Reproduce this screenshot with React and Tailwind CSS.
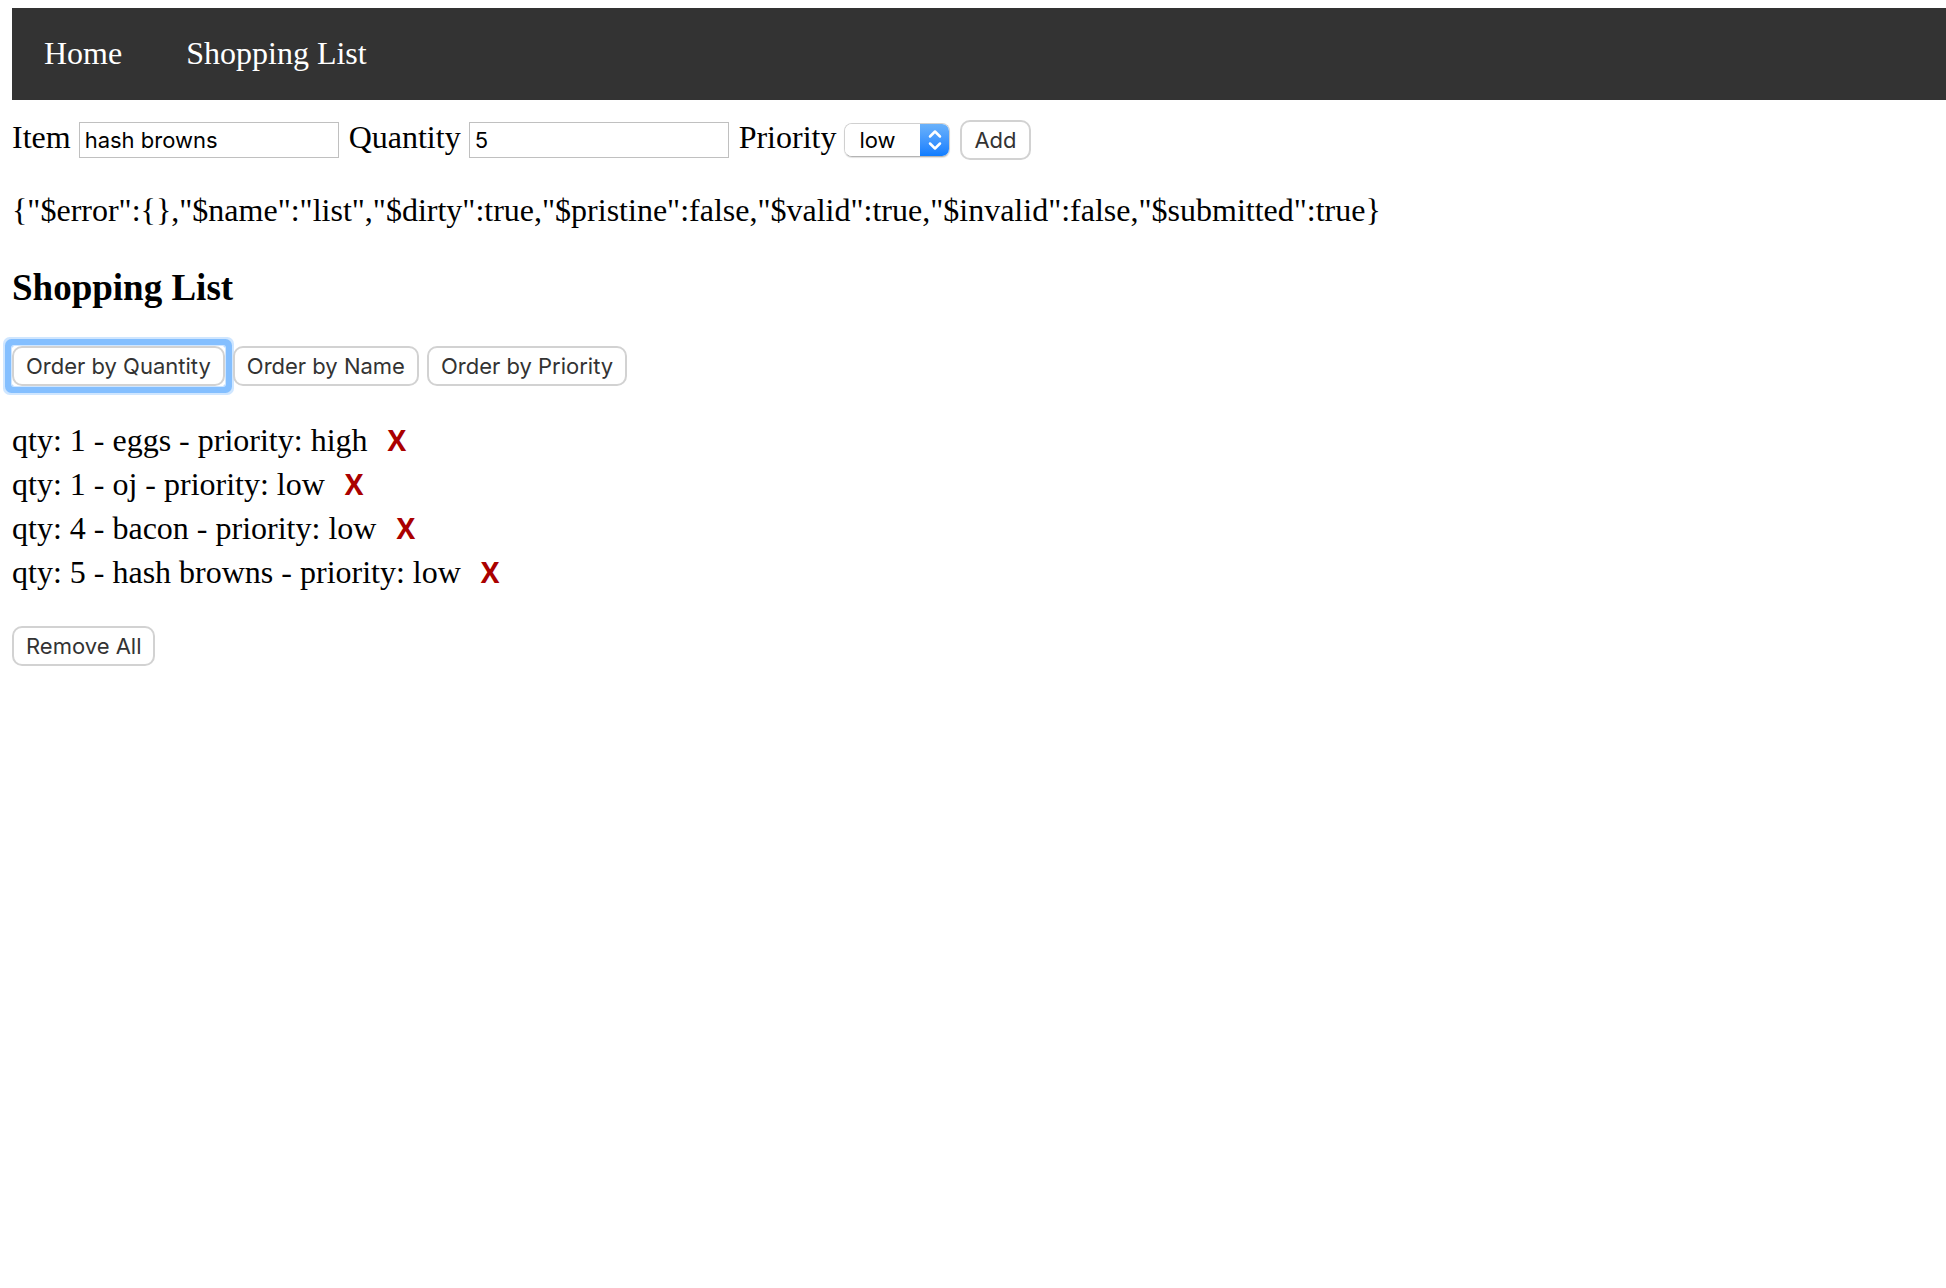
import { useState } from "react";

const initialItems = [
  { qty: 1, name: "eggs", priority: "high" },
  { qty: 1, name: "oj", priority: "low" },
  { qty: 4, name: "bacon", priority: "low" },
  { qty: 5, name: "hash browns", priority: "low" },
];

const formState =
  '{"$error":{},"$name":"list","$dirty":true,"$pristine":false,"$valid":true,"$invalid":false,"$submitted":true}';

function Button({ children, ...props }) {
  return (
    <button
      className="h-10 rounded-[10px] border-2 border-[#d2d2d2] bg-white px-3 font-[Inter,sans-serif] text-[22px] leading-9 text-[#333] outline-none"
      {...props}
    >
      {children}
    </button>
  );
}

function TextField({ id, label, value }) {
  return (
    <div className="flex items-baseline gap-2">
      <label htmlFor={id}>{label}</label>
      <input
        id={id}
        type="text"
        defaultValue={value}
        className="h-9 w-[260px] border border-[#c0c0c0] bg-white px-[5px] font-[Inter,sans-serif] text-[22px] leading-8 text-black outline-none"
      />
    </div>
  );
}

function PriorityField() {
  return (
    <div className="flex items-baseline gap-2">
      <label htmlFor="priority">Priority</label>
      <div className="grid h-[34px] w-[106px] overflow-hidden rounded-[8px] border border-[#d0d0d0] border-b-[#b4b4b4] shadow-[0_1px_1px_rgba(0,0,0,0.12)]">
        <select
          id="priority"
          defaultValue="low"
          className="col-start-1 row-start-1 appearance-none bg-white pl-[14px] font-[Inter,sans-serif] text-[22px] leading-8 text-black outline-none"
        >
          <option>low</option>
          <option>high</option>
        </select>
        <span className="pointer-events-none col-start-1 row-start-1 -m-px flex w-[30px] items-center justify-center justify-self-end bg-linear-to-b from-[#6cb3fa] to-[#067bff]">
          <svg width="14" height="22" viewBox="0 0 14 22" fill="none" stroke="white" strokeWidth="2.5" strokeLinecap="round" strokeLinejoin="round" aria-hidden="true">
            <path d="M2 7.5 7 2.5l5 5M2 14.5l5 5 5-5" />
          </svg>
        </span>
      </div>
    </div>
  );
}

export default function App() {
  const [items, setItems] = useState(initialItems);

  const orderBy = (key) =>
    setItems([...items].sort((a, b) => (a[key] > b[key] ? 1 : a[key] < b[key] ? -1 : 0)));

  return (
    <div className="min-h-screen bg-white pt-2 pl-3 font-['Liberation_Serif',serif] text-[32px] leading-[44px] text-black">
      <nav className="flex h-[92px] items-center gap-16 bg-[#333] px-8 pb-0.5 text-white">
        <a href="#home">Home</a>
        <a href="#list">Shopping List</a>
      </nav>

      <form className="mt-[15px] flex items-baseline gap-[10px]" onSubmit={(e) => e.preventDefault()}>
        <TextField id="item" label="Item" value="hash browns" />
        <TextField id="quantity" label="Quantity" value="5" />
        <PriorityField />
        <Button type="submit">Add</Button>
      </form>

      <p className="mt-7">{formState}</p>

      <h3 className="mt-[34px] text-[37px] font-bold">Shopping List</h3>

      <div className="mt-9 flex gap-2">
        <div className="flex rounded-[2px] shadow-[0_0_0_1px_#cfe6ff,0_0_0_7px_#84bfff,0_0_0_9px_#cfe6ff]">
          <Button type="button" onClick={() => orderBy("qty")}>Order by Quantity</Button>
        </div>
        <Button type="button" onClick={() => orderBy("name")}>Order by Name</Button>
        <Button type="button" onClick={() => orderBy("priority")}>Order by Priority</Button>
      </div>

      <ul className="mt-8">
        {items.map((item) => (
          <li key={item.name} className="flex gap-5">
            <span>
              qty: {item.qty} - {item.name} - priority: {item.priority}
            </span>
            <button
              type="button"
              aria-label={"Remove " + item.name}
              onClick={() => setItems(items.filter((i) => i !== item))}
              className="font-['Open_Sans',sans-serif] text-[28px] font-bold text-[#a00]"
            >
              X
            </button>
          </li>
        ))}
      </ul>

      <div className="mt-8 flex">
        <Button type="button" onClick={() => setItems([])}>Remove All</Button>
      </div>
    </div>
  );
}
